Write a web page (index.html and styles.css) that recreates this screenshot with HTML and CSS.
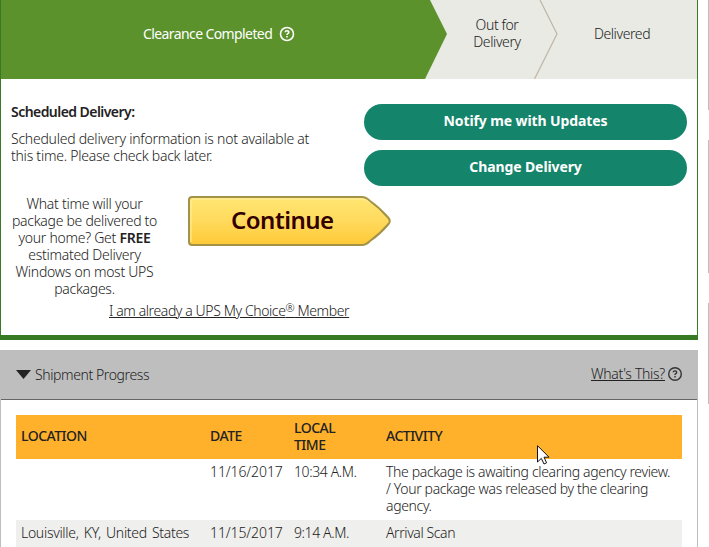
FILE: index.html
```html
<!DOCTYPE html>
<html lang="en">
  <head>
    <meta charset="UTF-8" />
    <title>Tracking Detail</title>
    <link rel="stylesheet" href="styles.css">
  </head>
  <body>
    <div class="page">
      <main class="main">
        <section class="status">
          <div class="steps">
            <svg class="steps-bg" width="696" height="79" viewBox="0 0 696 79">
              <path d="M0 0H429L446 34L424 79H0Z" fill="#5b922c" />
              <path d="M539 0L556 34L533.500 79" fill="none" stroke="#beb5a8" stroke-width="1.200" />
            </svg>
            <div class="step step-current">
              <span class="step-name">Clearance Completed</span>
              <svg class="help" width="16" height="16" viewBox="0 0 16 16">
                <circle cx="8" cy="8" r="6.500" />
                <path d="M6.200 6.300Q6.300 4.700 8 4.700Q9.800 4.700 9.800 6.200Q9.800 7 8.800 7.600Q8 8.100 8 9M8 10.100V11.600" />
              </svg>
            </div>
            <div class="step step-out">Out for<br />Delivery</div>
            <div class="step step-delivered">Delivered</div>
          </div>
          <div class="delivery">
            <div class="delivery-info">
              <h2>Scheduled Delivery:</h2>
              <p>Scheduled delivery information is not available at<br />this time. Please check back later.</p>
            </div>
            <div class="delivery-buttons">
              <button class="btn btn-notify">Notify me with Updates</button>
              <button class="btn btn-change">Change Delivery</button>
            </div>
          </div>
          <div class="choice">
            <p class="choice-text">What time will your<br />package be delivered to<br />your home? Get <b>FREE</b><br />estimated Delivery<br />Windows on most UPS<br />packages.</p>
            <div class="continue">
              <svg class="continue-bg" width="204" height="52" viewBox="0 0 204 52">
                <defs>
                  <linearGradient id="gold" x1="0" y1="0" x2="0" y2="1">
                    <stop offset="0" stop-color="#ffe673" />
                    <stop offset="0.500" stop-color="#ffda5d" />
                    <stop offset="1" stop-color="#ffc936" />
                  </linearGradient>
                </defs>
                <path d="M4 2H174Q178 2 182 6Q192 13 200.500 23Q203 26 200.500 29Q192 39 182 46Q178 50 174 50H4Q1 50 1 47V5Q1 2 4 2Z" fill="url(#gold)" stroke="#a39348" stroke-width="2" />
                <path d="M3 47V6Q3 4 5 4H174Q178 4 182 8" fill="none" stroke="#fff0a0" stroke-width="1" />
              </svg>
              <span class="continue-label">Continue</span>
            </div>
          </div>
          <a class="member">I am already a UPS My Choice<sup>®</sup> Member</a>
        </section>

        <section class="progress">
          <header class="progress-header">
            <svg class="arrow" width="15" height="9" viewBox="0 0 15 9"><path d="M0 0H15L7.500 9Z" fill="#222" /></svg>
            <span class="progress-title">Shipment Progress</span>
            <a class="whats-this">What's This?</a>
            <svg class="help help-dark" width="16" height="16" viewBox="0 0 16 16">
              <circle cx="8" cy="8" r="6.300" />
              <path d="M6.200 6.300Q6.300 4.900 8 4.900Q9.700 4.900 9.700 6.200Q9.700 7 8.800 7.600Q8 8.100 8 9M8 10.100V11.400" />
            </svg>
          </header>
          <table class="scans">
            <thead>
              <tr>
                <th class="col-location">LOCATION</th>
                <th class="col-date">DATE</th>
                <th class="col-time">LOCAL<br />TIME</th>
                <th class="col-activity">ACTIVITY</th>
              </tr>
            </thead>
            <tbody>
              <tr>
                <td></td>
                <td class="date">11/16/2017</td>
                <td>10:34 A.M.</td>
                <td class="activity">The package is awaiting clearing agency review.<br />/ Your package was released by the clearing<br />agency.</td>
              </tr>
              <tr class="odd">
                <td class="place">Louisville, KY, United States</td>
                <td class="date">11/15/2017</td>
                <td>9:14 A.M.</td>
                <td>Arrival Scan</td>
              </tr>
            </tbody>
          </table>
        </section>
      </main>
      <aside class="side">
        <div class="side-box side-top"></div>
        <div class="side-box side-middle"></div>
        <div class="side-box side-bottom"></div>
      </aside>
      <svg class="cursor" width="13" height="20" viewBox="0 0 13 20">
        <path d="M0.500 0.700V17L4.300 13.400L7 19L9.600 17.800L7 12.200H12Z" fill="#fff" stroke="#111" />
      </svg>
    </div>
  </body>
</html>
```
FILE: styles.css
```css
* {
  box-sizing: border-box;
}

body {
  margin: 0;
  background: #fff;
  color: #222;
  font-family: "Noto Sans", "Open Sans", sans-serif;
  font-size: 14px;
  font-weight: 300;
  line-height: 17px;
  letter-spacing: -0.4px;
}

h2,
p {
  margin: 0;
}

.page {
  position: relative;
  display: flex;
  justify-content: space-between;
  height: 547px;
  overflow: hidden;
  white-space: nowrap;
}

.main {
  width: 698px;
}

.status {
  height: 340px;
  border: 1px solid #3b7a24;
  border-top: none;
  border-bottom: 5px solid #387a24;
}

.steps {
  position: relative;
  display: flex;
  align-items: center;
  height: 79px;
  background: #e9eae4;
}

.steps-bg {
  position: absolute;
  left: 0;
  top: 0;
}

.step {
  position: relative;
  text-align: center;
  padding-bottom: 12px;
}

.step-current {
  display: flex;
  align-items: center;
  gap: 7px;
  width: 446px;
  padding-left: 142px;
  color: #fff;
  font-weight: 400;
  letter-spacing: -0.6px;
}

.step-out {
  width: 100px;
  padding-bottom: 13px;
}

.step-delivered {
  width: 150px;
}

.help {
  fill: none;
  stroke: #fff;
  stroke-width: 1.6px;
}

.help-dark {
  stroke: #333;
  stroke-width: 1.4px;
}

.delivery {
  display: flex;
  justify-content: space-between;
  padding: 25px 10px 0;
}

.delivery-info {
  letter-spacing: -0.24px;
}

.delivery-info h2 {
  font-size: 14px;
  font-weight: 600;
  letter-spacing: -0.55px;
  margin: -1px 0 10px;
}

.delivery-buttons {
  display: flex;
  flex-direction: column;
  gap: 10px;
}

.btn {
  width: 323px;
  height: 36px;
  padding: 0 0 3px;
  border: none;
  border-radius: 18px;
  background: #14846b;
  color: #fff;
  font: inherit;
  font-weight: 700;
  letter-spacing: -0.1px;
}

.choice {
  display: flex;
  gap: 20px;
  padding: 9px 0 0 0;
}

.choice-text {
  width: 167px;
  text-align: center;
  letter-spacing: -0.27px;
}

.choice-text b {
  font-weight: 600;
}

.continue {
  position: relative;
  width: 204px;
  height: 52px;
}

.continue-bg {
  display: block;
}

.continue-label {
  position: absolute;
  left: 43px;
  top: 9px;
  color: #300;
  font-size: 24px;
  font-weight: 600;
  line-height: 32px;
  letter-spacing: -0.5px;
}

.member {
  display: block;
  width: max-content;
  margin: 5px 0 0 108px;
  text-decoration: underline;
}

.member sup {
  font-size: 11px;
  line-height: 0;
  vertical-align: 4px;
}

.progress {
  margin-top: 10px;
  border: 1px solid #bebebe;
  border-top: none;
  height: 220px;
}

.progress-header {
  display: flex;
  align-items: center;
  height: 50px;
  padding: 0 14px 0 15px;
  background: #bebebe;
  border-bottom: 1px solid #666;
}

.progress-title {
  margin-left: 4px;
}

.whats-this {
  margin-left: auto;
  margin-right: 2px;
  margin-top: -2px;
  text-decoration: underline;
  letter-spacing: -0.3px;
}

.help-dark {
  margin-top: -2px;
}

.scans {
  width: 666px;
  margin: 15px 0 0 15px;
  table-layout: fixed;
  border-collapse: collapse;
}

.scans th,
.scans td {
  padding: 4px 5px 6px;
  text-align: left;
  vertical-align: top;
}

.scans th {
  height: 44px;
  background: #ffb12b;
  font-weight: 500;
  letter-spacing: -0.5px;
  padding: 3px 5px 6px;
  vertical-align: middle;
}

.col-location {
  width: 189px;
}

.col-date {
  width: 84px;
}

.col-time {
  width: 92px;
}

.scans .date {
  letter-spacing: -0.1px;
}

.scans .activity {
  letter-spacing: -0.35px;
}

.scans .place {
  letter-spacing: -0.3px;
  word-spacing: 1.8px;
}

.odd {
  background: #efefed;
}

.side {
  width: 1px;
}

.side-box {
  background: #bebebe;
}

.side-top {
  height: 110px;
}

.side-middle {
  height: 133px;
  margin: 30px 0;
}

.side-bottom {
  height: 101px;
}

.cursor {
  position: absolute;
  left: 537px;
  top: 445px;
}
```
